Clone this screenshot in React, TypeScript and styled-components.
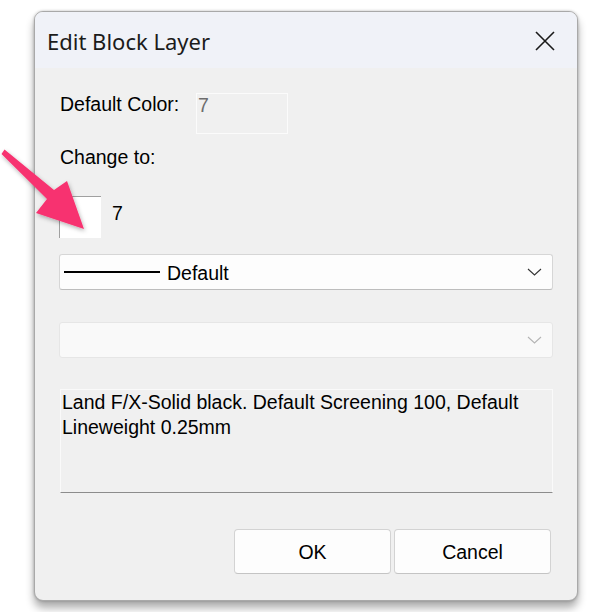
import React from 'react';
import styled, { createGlobalStyle } from 'styled-components';

const GlobalStyle = createGlobalStyle`
  html, body {
    margin: 0;
    padding: 0;
    background: #ffffff;
  }
  body {
    font-family: 'Liberation Sans', Arial, sans-serif;
  }
`;

const Page = styled.div`
  position: relative;
  width: 592px;
  height: 612px;
  padding: 11px 0 0 34px;
  box-sizing: border-box;
  overflow: hidden;
`;

const Dialog = styled.div`
  width: 544px;
  height: 590px;
  box-sizing: border-box;
  border: 1px solid #a9a9a9;
  border-radius: 9px;
  background: #f0f0f0;
  box-shadow: 0 7px 9px rgba(0, 0, 0, 0.32), 0 0 3px rgba(0, 0, 0, 0.25);
  display: flex;
  flex-direction: column;
  overflow: hidden;
`;

const TitleBar = styled.div`
  height: 56px;
  flex-shrink: 0;
  background: #f0f2f8;
  display: flex;
  align-items: center;
  justify-content: space-between;
  padding: 0 22px 0 12px;
`;

const Title = styled.div`
  font-family: 'Noto Sans', 'Open Sans', sans-serif;
  font-size: 22px;
  color: #1b1b1b;
  margin-top: 1px;
`;

const CloseButton = styled.div`
  width: 20px;
  height: 20px;
  display: flex;
  align-items: center;
  justify-content: center;
  margin-top: 1px;
`;

const Body = styled.div`
  flex: 1;
  display: flex;
  flex-direction: column;
  padding: 25px 24px 0 25px;
  font-size: 19.5px;
  line-height: 22px;
  color: #000;
`;

const Row = styled.div<{ top?: number }>`
  display: flex;
  align-items: flex-start;
  margin-top: ${(p) => p.top ?? 0}px;
`;

const Label = styled.div<{ width?: number }>`
  width: ${(p) => (p.width ? `${p.width}px` : 'auto')};
  flex-shrink: 0;
`;

const ColorField = styled.div`
  width: 92px;
  height: 41px;
  box-sizing: border-box;
  border: 1px solid #fbfbfb;
  padding-left: 1px;
  color: #6d6d6d;
`;

const Swatch = styled.div`
  width: 42px;
  height: 42px;
  box-sizing: border-box;
  margin-left: -1px;
  background: #ffffff;
  border-top: 1px solid #a0a0a0;
  border-left: 1px solid #a0a0a0;
`;

const SwatchNumber = styled.div`
  margin: 6px 0 0 11px;
`;

const Select = styled.div<{ disabled?: boolean; top: number }>`
  height: 36px;
  box-sizing: border-box;
  margin: ${(p) => p.top}px 0 0 -1px;
  border: 1px solid ${(p) => (p.disabled ? '#e6e6e6' : '#d6d6d6')};
  border-bottom-color: ${(p) => (p.disabled ? '#e6e6e6' : '#bdbdbd')};
  border-radius: 3px;
  background: ${(p) => (p.disabled ? '#f9f9f9' : '#fdfdfd')};
  display: flex;
  align-items: center;
  padding: 0 10px 0 4px;
`;

const LineSample = styled.div`
  width: 96px;
  height: 2px;
  background: #000;
  margin-right: 7px;
`;

const SelectText = styled.div`
  flex: 1;
  margin-top: 1px;
`;

const Chevron = styled.svg`
  margin-left: auto;
`;

const Description = styled.div`
  margin-top: 31px;
  height: 104px;
  box-sizing: border-box;
  border: 1px solid #fafafa;
  border-bottom: 1px solid #8c8c8c;
  padding: 0 4px 0 1px;
  line-height: 25px;
`;

const Buttons = styled.div`
  display: flex;
  justify-content: flex-end;
  gap: 3px;
  margin: 36px 2px 0 0;
`;

const Button = styled.div`
  width: 157px;
  height: 45px;
  box-sizing: border-box;
  border: 1px solid #d3d3d3;
  border-bottom-color: #c4c4c4;
  border-radius: 4px;
  background: #fdfdfd;
  display: flex;
  align-items: center;
  justify-content: center;
`;

const ArrowOverlay = styled.svg`
  position: absolute;
  left: 0;
  top: 0;
  pointer-events: none;
`;

const ChevronIcon = ({ color }: { color: string }) => (
  <Chevron width="15" height="8" viewBox="0 0 15 8">
    <path d="M1 1 L7.5 7 L14 1" fill="none" stroke={color} strokeWidth="1.1" />
  </Chevron>
);

const App = () => {
  return (
    <Page>
      <GlobalStyle />
      <Dialog>
        <TitleBar>
          <Title>Edit Block Layer</Title>
          <CloseButton>
            <svg width="20" height="20" viewBox="0 0 20 20">
              <path
                d="M1 1 L19 19 M19 1 L1 19"
                stroke="#1a1a1a"
                strokeWidth="1.6"
                fill="none"
              />
            </svg>
          </CloseButton>
        </TitleBar>
        <Body>
          <Row>
            <Label width={136}>Default Color:</Label>
            <ColorField>7</ColorField>
          </Row>
          <Row top={12}>
            <Label>Change to:</Label>
          </Row>
          <Row top={28}>
            <Swatch />
            <SwatchNumber>7</SwatchNumber>
          </Row>
          <Select top={16}>
            <LineSample />
            <SelectText>Default</SelectText>
            <ChevronIcon color="#333333" />
          </Select>
          <Select top={32} disabled>
            <ChevronIcon color="#b4b4b4" />
          </Select>
          <Description>
            Land F/X-Solid black. Default Screening 100, Default Lineweight
            0.25mm
          </Description>
          <Buttons>
            <Button>OK</Button>
            <Button>Cancel</Button>
          </Buttons>
        </Body>
      </Dialog>
      <ArrowOverlay width="592" height="612" viewBox="0 0 592 612">
        <defs>
          <filter id="arrowShadow" x="-20%" y="-20%" width="140%" height="140%">
            <feDropShadow dx="1" dy="2" stdDeviation="2" floodColor="#000" floodOpacity="0.3" />
          </filter>
        </defs>
        <polygon
          points="1.5,154 4.5,149.5 54,190 67,181 84,229 36,213 47,199"
          fill="#f7336f"
          filter="url(#arrowShadow)"
        />
      </ArrowOverlay>
    </Page>
  );
};

export default App;
